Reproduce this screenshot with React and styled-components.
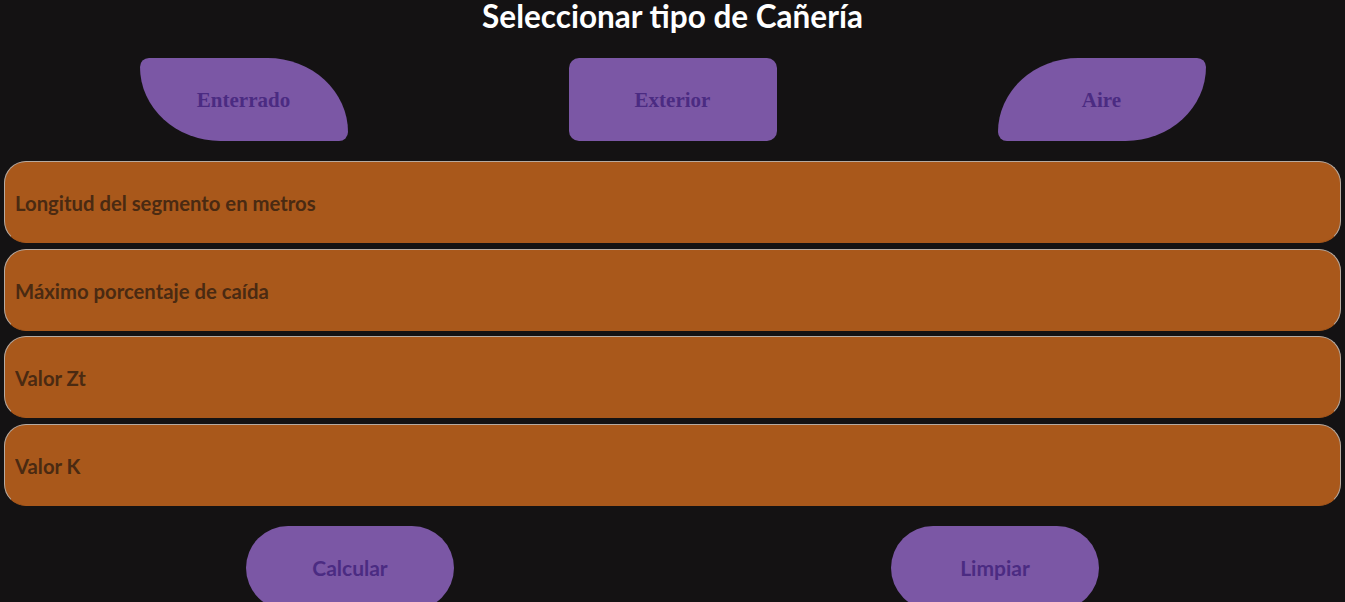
import React, { useState } from "react";
import styled, { createGlobalStyle, css } from "styled-components";

const GlobalStyle = createGlobalStyle`
    html, body {
        margin: 0;
        padding: 0;
        background: #141213;
        overflow: hidden;
    }
    * {
        box-sizing: border-box;
    }
`;

const Page = styled.div`
    display: flex;
    flex-direction: column;
    font-family: Lato, "Liberation Sans", sans-serif;
    height: 602px;
`;

const Title = styled.h1`
    margin: 0;
    height: 32px;
    line-height: 32px;
    text-align: center;
    color: #ffffff;
    font-size: 31.5px;
    font-weight: 700;
`;

const TypeRow = styled.div`
    display: flex;
    justify-content: center;
    gap: 221px;
    margin-top: 26px;
`;

const shapes = {
    left: css`
        border-top-left-radius: 10px;
        border-top-right-radius: 90px 83px;
        border-bottom-right-radius: 10px;
        border-bottom-left-radius: 90px 83px;
    `,
    middle: css`
        border-radius: 10px;
    `,
    right: css`
        border-top-left-radius: 90px 83px;
        border-top-right-radius: 10px;
        border-bottom-right-radius: 90px 83px;
        border-bottom-left-radius: 10px;
    `,
};

const TypeButton = styled.button`
    width: 208px;
    height: 83px;
    padding-top: 2px;
    border: none;
    background: ${(p) => (p.selected ? "#8a66b5" : "#7b57a5")};
    color: #4b2b82;
    font-family: "Liberation Serif", "Times New Roman", serif;
    font-weight: 700;
    font-size: 21px;
    cursor: pointer;
    ${(p) => shapes[p.shape]}
`;

const Fields = styled.div`
    display: flex;
    flex-direction: column;
    gap: 5.5px;
    margin: 20px 4px 0;
`;

const Field = styled.input`
    height: 82px;
    width: 100%;
    border-radius: 22px;
    border: 1px solid #b7aaa0;
    border-bottom-color: #a9581b;
    background: #a9581b;
    padding: 2px 10px 0;
    font-family: Lato, "Liberation Sans", sans-serif;
    font-weight: 700;
    font-size: 20.3px;
    color: #3a1f0a;
    outline: none;

    &::placeholder {
        color: #4a2a12;
        opacity: 1;
    }
`;

const ActionRow = styled.div`
    display: flex;
    justify-content: center;
    gap: 437px;
    margin-top: 20px;
`;

const ActionButton = styled.button`
    width: 208px;
    height: 84px;
    border: none;
    border-radius: 42px;
    background: #7b57a5;
    color: #4b2b82;
    font-family: Lato, "Liberation Sans", sans-serif;
    font-weight: 700;
    font-size: 21px;
    cursor: pointer;
`;

const tipos = [
    { id: "enterrado", label: "Enterrado", shape: "left" },
    { id: "exterior", label: "Exterior", shape: "middle" },
    { id: "aire", label: "Aire", shape: "right" },
];

const campos = [
    "Longitud del segmento en metros",
    "Máximo porcentaje de caída",
    "Valor Zt",
    "Valor K",
];

export default function App() {
    const [tipo, setTipo] = useState(null);
    const [valores, setValores] = useState(campos.map(() => ""));

    const handleChange = (index, value) => {
        const nuevos = [...valores];
        nuevos[index] = value;
        setValores(nuevos);
    };

    return (
        <Page>
            <GlobalStyle />
            <Title>Seleccionar tipo de Cañería</Title>
            <TypeRow>
                {tipos.map((t) => (
                    <TypeButton
                        key={t.id}
                        shape={t.shape}
                        selected={tipo === t.id}
                        onClick={() => setTipo(t.id)}
                    >
                        {t.label}
                    </TypeButton>
                ))}
            </TypeRow>
            <Fields>
                {campos.map((c, i) => (
                    <Field
                        key={c}
                        placeholder={c}
                        value={valores[i]}
                        onChange={(e) => handleChange(i, e.target.value)}
                    />
                ))}
            </Fields>
            <ActionRow>
                <ActionButton>Calcular</ActionButton>
                <ActionButton onClick={() => setValores(campos.map(() => ""))}>
                    Limpiar
                </ActionButton>
            </ActionRow>
        </Page>
    );
}
